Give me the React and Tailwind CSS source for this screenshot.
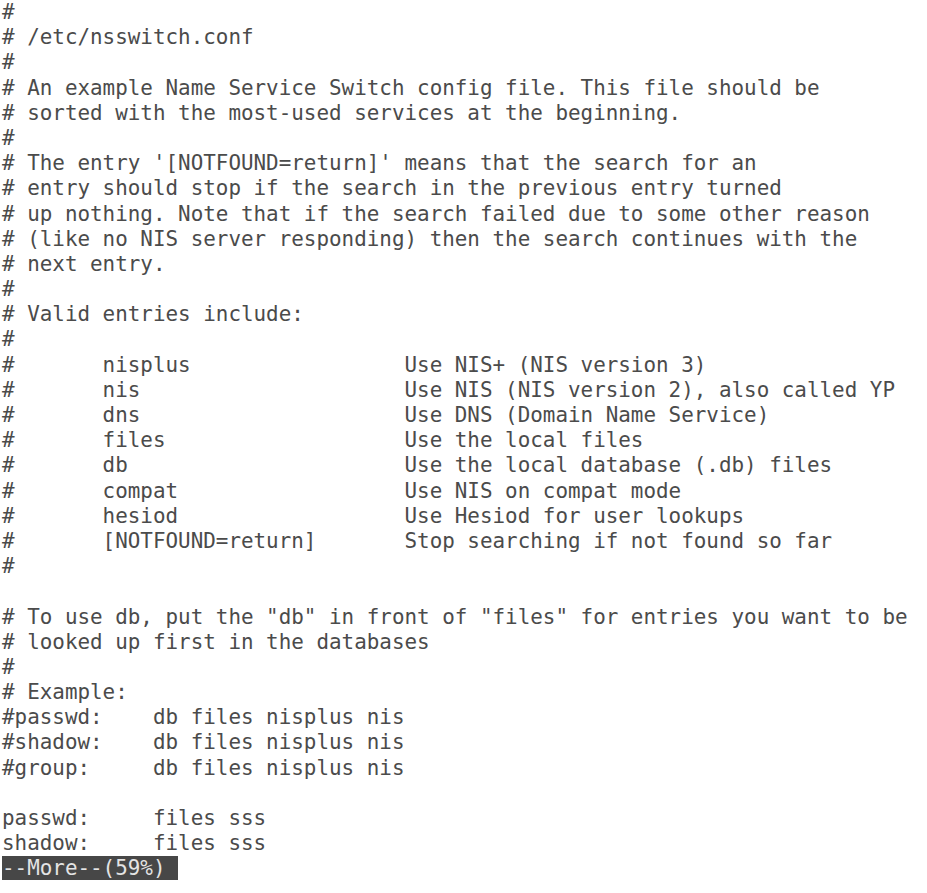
const lines = [
  '#',
  '# /etc/nsswitch.conf',
  '#',
  '# An example Name Service Switch config file. This file should be',
  '# sorted with the most-used services at the beginning.',
  '#',
  "# The entry '[NOTFOUND=return]' means that the search for an",
  '# entry should stop if the search in the previous entry turned',
  '# up nothing. Note that if the search failed due to some other reason',
  '# (like no NIS server responding) then the search continues with the',
  '# next entry.',
  '#',
  '# Valid entries include:',
  '#',
  '#       nisplus                 Use NIS+ (NIS version 3)',
  '#       nis                     Use NIS (NIS version 2), also called YP',
  '#       dns                     Use DNS (Domain Name Service)',
  '#       files                   Use the local files',
  '#       db                      Use the local database (.db) files',
  '#       compat                  Use NIS on compat mode',
  '#       hesiod                  Use Hesiod for user lookups',
  '#       [NOTFOUND=return]       Stop searching if not found so far',
  '#',
  '',
  '# To use db, put the "db" in front of "files" for entries you want to be',
  '# looked up first in the databases',
  '#',
  '# Example:',
  '#passwd:    db files nisplus nis',
  '#shadow:    db files nisplus nis',
  '#group:     db files nisplus nis',
  '',
  'passwd:     files sss',
  'shadow:     files sss',
];

export default function App() {
  return (
    <div className="min-h-screen bg-white pl-[2px] pt-0 text-[#4b4b4b] font-['DejaVu_Sans_Mono',monospace] text-[20.9px] leading-[25.2px]">
      <pre className="font-['DejaVu_Sans_Mono',monospace] whitespace-pre">
        {lines.map((l, i) => (
          <div key={i} className="h-[25.2px]">
            {l || ' '}
          </div>
        ))}
        <div className="h-[25.2px]">
          <span className="bg-[#474747] text-[#e4e4e4]">--More--(59%) </span>
        </div>
      </pre>
    </div>
  );
}
